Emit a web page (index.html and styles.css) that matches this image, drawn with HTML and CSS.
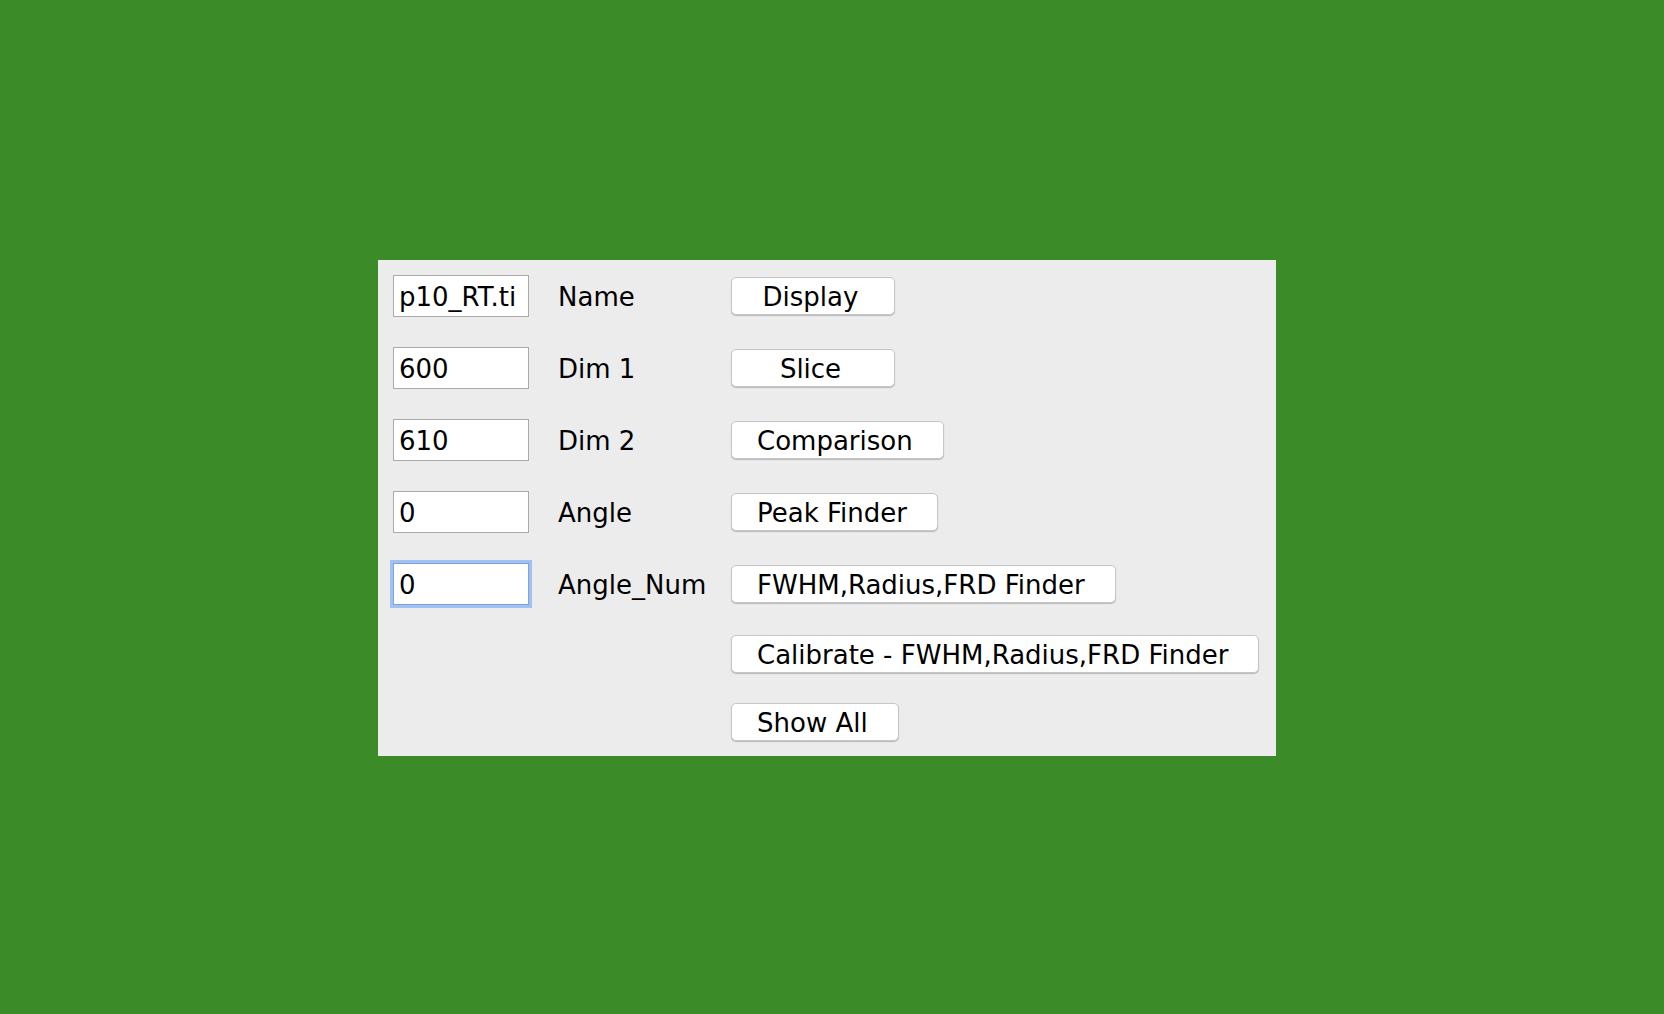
FILE: index.html
```html
<!DOCTYPE html>
<html>
<head>
<meta charset="utf-8">
<link rel="stylesheet" href="styles.css">
</head>
<body>
<div class="panel">
  <div class="grid">
    <input class="field" type="text" value="p10_RT.ti">
    <span class="label">Name</span>
    <div class="cell"><button class="btn btn-min">Display</button></div>

    <input class="field" type="text" value="600">
    <span class="label">Dim 1</span>
    <div class="cell"><button class="btn btn-min">Slice</button></div>

    <input class="field" type="text" value="610">
    <span class="label">Dim 2</span>
    <div class="cell"><button class="btn">Comparison</button></div>

    <input class="field" type="text" value="0">
    <span class="label">Angle</span>
    <div class="cell"><button class="btn">Peak Finder</button></div>

    <input class="field field-focus" type="text" value="0">
    <span class="label">Angle_Num</span>
    <div class="cell"><button class="btn">FWHM,Radius,FRD Finder</button></div>

    <div class="cell btn-only"><button class="btn">Calibrate - FWHM,Radius,FRD Finder</button></div>

    <div class="cell btn-only"><button class="btn">Show All</button></div>
  </div>
</div>
</body>
</html>
```
FILE: styles.css
```css
html, body {
  margin: 0;
  padding: 0;
}
body {
  background: #3b8b28;
  width: 1664px;
  height: 1014px;
  padding: 260px 0 0 378px;
  box-sizing: border-box;
  font-family: "DejaVu Sans", Verdana, sans-serif;
  font-size: 26px;
  color: #000;
}
.panel {
  width: 898px;
  height: 496px;
  box-sizing: border-box;
  background: #ececec;
  padding: 15px 0 0 15px;
}
.grid {
  display: grid;
  grid-template-columns: 136px 144px auto;
  column-gap: 29px;
  row-gap: 30px;
  align-items: center;
}
.field {
  display: block;
  width: 136px;
  height: 42px;
  box-sizing: border-box;
  margin: 0;
  border: 1px solid #ababab;
  background: #fff;
  padding: 2px 0 0 5px;
  font-family: "DejaVu Sans", Verdana, sans-serif;
  font-size: 26px;
  color: #000;
  outline: none;
}
.field-focus {
  border-color: #7ea3d6;
  box-shadow: 0 0 0 3px #a0c2f2;
}
.label {
  white-space: nowrap;
  height: 42px;
  box-sizing: border-box;
  line-height: 40px;
  padding-top: 2px;
}
.cell {
  display: flex;
  align-items: center;
}
.btn-only {
  grid-column: 3;
}
.btn {
  height: 38px;
  box-sizing: border-box;
  margin: 0;
  padding: 2px 30px 0 25px;
  background: #fff;
  border: 1px solid #c6c6c6;
  border-radius: 5px;
  box-shadow: 0 1px 1px rgba(0, 0, 0, 0.22);
  font-family: "DejaVu Sans", Verdana, sans-serif;
  font-size: 26px;
  color: #000;
  white-space: nowrap;
  line-height: 34px;
}
.btn-min {
  min-width: 164px;
}
```
